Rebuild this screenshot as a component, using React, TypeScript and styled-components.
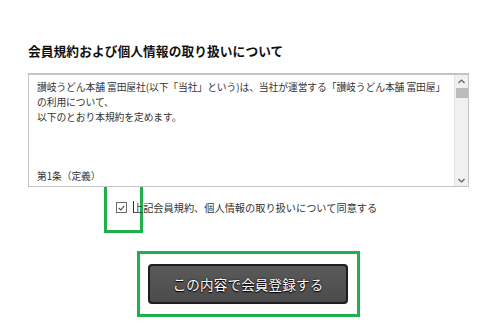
import React from "react";
import styled, { createGlobalStyle } from "styled-components";

const Global = createGlobalStyle`
  html, body { margin: 0; padding: 0; background: #fff; }
  body { font-family: "Noto Sans CJK JP", "Noto Sans", sans-serif; color: #222; }
`;

const Page = styled.div`
  width: 501px;
  height: 336px;
  box-sizing: border-box;
  padding: 42px 32px 0 28px;
  display: flex;
  flex-direction: column;
  overflow: hidden;
`;

const Title = styled.h2`
  margin: 0;
  font-size: 12.7px;
  line-height: 17px;
  font-weight: 700;
  color: #111;
  letter-spacing: 0.1px;
`;

const TermsBox = styled.div`
  margin-top: 14px;
  height: 114px;
  width: 441px;
  box-sizing: border-box;
  border: 1px solid #c4c4c4;
  border-top-width: 2px;
  display: flex;
`;

const TermsText = styled.div`
  flex: 1;
  padding: 5px 8px 0 8px;
  font-size: 9.8px;
  line-height: 14.8px;
  letter-spacing: -0.1px;
  color: #333;
  white-space: pre;
  overflow: hidden;
`;

const ScrollBar = styled.div`
  width: 13px;
  background: #f0f0f0;
  border-left: 1px solid #e2e2e2;
  display: flex;
  flex-direction: column;
  align-items: center;
`;

const Arrow = styled.div`
  height: 12px;
  display: flex;
  align-items: center;
  justify-content: center;
`;

const Thumb = styled.div`
  width: 12px;
  height: 10px;
  background: #bcbcbc;
  margin-top: 1px;
`;

const Spacer = styled.div`
  flex: 1;
`;

const AgreeRow = styled.div`
  display: flex;
  justify-content: flex-start;
  margin-left: 76px;
  height: 46px;
`;

const CheckHighlight = styled.div`
  border: 3px solid #1fb04c;
  border-top: none;
  box-sizing: border-box;
  width: 39px;
  height: 46px;
  display: flex;
  align-items: flex-start;
  padding: 15px 0 0 9px;
`;

const CheckBox = styled.span`
  width: 9px;
  height: 9px;
  border: 1px solid #6b6b6b;
  background: #fff;
  display: inline-flex;
  align-items: center;
  justify-content: center;
  flex: none;
`;

const Caret = styled.span`
  width: 1px;
  height: 12px;
  margin-top: -1px;
  background: #333;
  margin-left: 6px;
  flex: none;
`;

const AgreeLabel = styled.span`
  font-size: 10.2px;
  line-height: 12px;
  color: #333;
  margin-top: 15px;
  margin-left: -10px;
  white-space: nowrap;
`;

const ButtonArea = styled.div`
  display: flex;
  justify-content: flex-start;
  margin-left: 109px;
  margin-top: 18px;
`;

const ButtonFrame = styled.div`
  border: 3px solid #1fb04c;
  padding: 10px 9px 10px 8px;
  width: 223px;
  height: 66px;
  box-sizing: border-box;
  display: flex;
`;

const SubmitButton = styled.button`
  flex: 1;
  height: 40px;
  border: 2px solid #1e1e1e;
  border-radius: 4px;
  background: linear-gradient(#5a5a5a, #4b4b4b);
  color: #fff;
  font-family: "Noto Sans CJK JP", sans-serif;
  font-size: 13.5px;
  letter-spacing: 0.2px;
  text-shadow: 0 0 2px #000, 0 1px 1px #000;
  cursor: pointer;
  padding: 0;
`;

const terms = `讃岐うどん本舗 富田屋社(以下「当社」という)は、当社が運営する「讃岐うどん本舗 富田屋」
の利用について、
以下のとおり本規約を定めます。



第1条（定義）`;

export default function App() {
  return (
    <>
      <Global />
      <Page>
        <Title>会員規約および個人情報の取り扱いについて</Title>
        <TermsBox>
          <TermsText>{terms}</TermsText>
          <ScrollBar>
            <Arrow>
              <svg width="7" height="5" viewBox="0 0 7 5">
                <path d="M0.5 4 L3.5 1 L6.5 4" fill="none" stroke="#606060" strokeWidth="1.2" />
              </svg>
            </Arrow>
            <Thumb />
            <Spacer />
            <Arrow>
              <svg width="7" height="5" viewBox="0 0 7 5">
                <path d="M0.5 1 L3.5 4 L6.5 1" fill="none" stroke="#606060" strokeWidth="1.2" />
              </svg>
            </Arrow>
          </ScrollBar>
        </TermsBox>
        <AgreeRow>
          <CheckHighlight>
            <CheckBox>
              <svg width="7" height="6" viewBox="0 0 7 6">
                <path d="M0.8 3 L2.8 5 L6.3 0.8" fill="none" stroke="#444" strokeWidth="1.1" />
              </svg>
            </CheckBox>
            <Caret />
          </CheckHighlight>
          <AgreeLabel>上記会員規約、個人情報の取り扱いについて同意する</AgreeLabel>
        </AgreeRow>
        <ButtonArea>
          <ButtonFrame>
            <SubmitButton>この内容で会員登録する</SubmitButton>
          </ButtonFrame>
        </ButtonArea>
      </Page>
    </>
  );
}
